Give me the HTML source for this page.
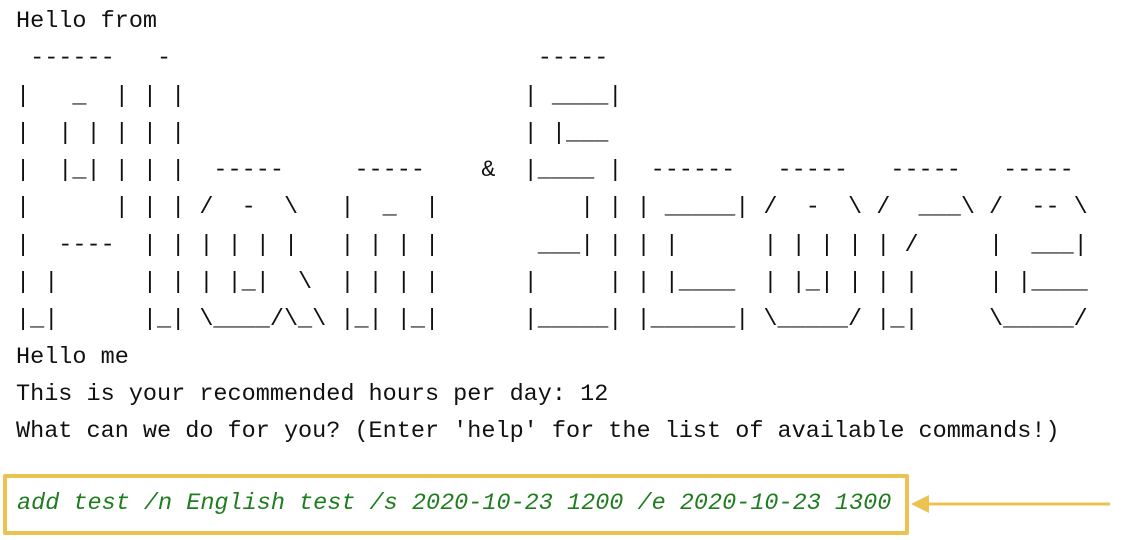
<!DOCTYPE html>
<html><head><meta charset="utf-8"><style>
html,body{margin:0;padding:0;background:#fff;width:1124px;height:540px;overflow:hidden}
pre{position:absolute;left:16px;top:3px;margin:0;font-family:"Liberation Mono",monospace;font-size:23.5px;line-height:37.3px;color:#111}
.box{position:absolute;left:3px;top:474px;width:898px;height:53px;border:4px solid #ecc350;border-radius:2px}
.cmd{position:absolute;left:17px;top:490px;font-family:"Liberation Mono",monospace;font-size:23.5px;font-style:italic;color:#1f7d1f;white-space:pre}
</style></head><body>
<pre>Hello from
 ------   -                          -----
|   _  | | |                        | ____|
|  | | | | |                        | |___
|  |_| | | |  -----     -----    &amp;  |____ |  ------   -----   -----   -----
|      | | | /  -  \   |  _  |          | | | _____| /  -  \ /  ___\ /  -- \
|  ----  | | | | | |   | | | |       ___| | | |      | | | | | /     |  ___|
| |      | | | |_|  \  | | | |      |     | | |____  | |_| | | |     | |____
|_|      |_| \____/\_\ |_| |_|      |_____| |______| \_____/ |_|     \_____/
Hello me
This is your recommended hours per day: 12
What can we do for you? (Enter 'help' for the list of available commands!)</pre>
<div class="box"></div>
<div class="cmd">add test /n English test /s 2020-10-23 1200 /e 2020-10-23 1300</div>
<svg style="position:absolute;left:905px;top:490px" width="215" height="30">
<line x1="18" y1="14" x2="205" y2="14" stroke="#ecc350" stroke-width="3"/>
<polygon points="6,14 24,5 24,23" fill="#ecc350"/>
</svg>
</body></html>
